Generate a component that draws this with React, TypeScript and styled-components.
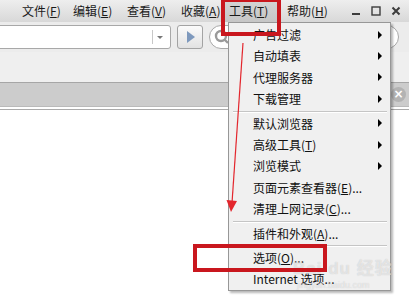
import React from 'react';
import styled, { createGlobalStyle } from 'styled-components';

const GlobalStyle = createGlobalStyle`
  html, body {
    margin: 0;
    padding: 0;
  }
  body {
    font-family: "Noto Sans CJK SC", "Noto Sans", sans-serif;
    font-size: 12px;
    color: #111;
  }
`;

const Frame = styled.div`
  position: relative;
  width: 409px;
  height: 306px;
  overflow: hidden;
  background: #fff;
`;

const MenuBar = styled.div`
  height: 22px;
  display: flex;
  align-items: center;
  padding-left: 14px;
  background: linear-gradient(#eeeeee, #d8d8d8);
`;

const TopItem = styled.div<{ $active?: boolean; $w?: number }>`
  box-sizing: border-box;
  width: ${(p) => (p.$w ? `${p.$w}px` : 'auto')};
  height: 22px;
  line-height: 22px;
  padding: 0 8px;
  white-space: nowrap;
  color: #1a1a1a;
  background: ${(p) => (p.$active ? 'linear-gradient(#d4d4d4, #c6c6c6)' : 'transparent')};
`;

const WinButtons = styled.div`
  margin-left: auto;
  display: flex;
  align-items: center;
  gap: 10px;
  padding-right: 8px;
  color: #3c3c3c;
`;

const AddressRow = styled.div`
  height: 30px;
  display: flex;
  align-items: center;
  gap: 6px;
  padding-right: 10px;
  background: #ececec;
`;

const AddressBox = styled.div`
  width: 172px;
  height: 22px;
  margin-left: -3px;
  display: flex;
  align-items: center;
  justify-content: flex-end;
  background: #fff;
  border: 1px solid #a8a8a8;
  border-radius: 3px;
`;

const DropSep = styled.div`
  width: 1px;
  height: 14px;
  background: #c8c8c8;
  margin-right: 4px;
`;

const DropArrow = styled.div`
  width: 0;
  height: 0;
  margin-right: 7px;
  border-left: 3px solid transparent;
  border-right: 3px solid transparent;
  border-top: 3px solid #777;
`;

const GoButton = styled.div`
  width: 24px;
  height: 22px;
  display: flex;
  align-items: center;
  justify-content: center;
  border: 1px solid #a3a3a3;
  border-radius: 3px;
  background: linear-gradient(#fbfbfb, #e2e2e2);
`;

const GoArrow = styled.div`
  width: 0;
  height: 0;
  margin-left: 2px;
  border-top: 6px solid transparent;
  border-bottom: 6px solid transparent;
  border-left: 8px solid #7e99bd;
`;

const SearchBox = styled.div`
  flex: 1;
  height: 22px;
  display: flex;
  align-items: center;
  padding-left: 4px;
  background: #fff;
  border: 1px solid #a8a8a8;
  border-radius: 12px;
`;

const Strip = styled.div`
  height: 30px;
  background: #efefef;
  border-bottom: 1px solid #a6a6a6;
`;

const TabStrip = styled.div`
  height: 23px;
  display: flex;
  align-items: center;
  justify-content: flex-end;
  padding-right: 3px;
  background: #cccccc;
  border-bottom: 1px solid #bababa;
`;

const CloseTab = styled.div`
  width: 15px;
  height: 15px;
  border-radius: 50%;
  background: #b3b3b3;
  color: #fff;
  font-family: "DejaVu Sans", sans-serif;
  font-size: 12px;
  font-weight: bold;
  line-height: 15px;
  text-align: center;
`;

const ContentTop = styled.div`
  height: 2px;
  background: #fff;
  border-bottom: 1px solid #aaaaaa;
`;

const Menu = styled.div`
  position: absolute;
  left: 228px;
  top: 22px;
  width: 161px;
  padding: 1px 0 0;
  background: #f0f0f0;
  border: 1px solid #979797;
  box-shadow: 2px 2px 2px rgba(0, 0, 0, 0.28);
`;

const MenuItem = styled.div`
  height: 21.4px;
  line-height: 21.4px;
  display: flex;
  align-items: center;
  padding-left: 24px;
  padding-right: 8px;
  color: #111;
`;

const Label = styled.span`
  flex: 1;
  white-space: nowrap;
`;

const SubArrow = styled.div`
  width: 0;
  height: 0;
  border-top: 4px solid transparent;
  border-bottom: 4px solid transparent;
  border-left: 4px solid #000;
`;

const Separator = styled.div`
  height: 0;
  margin: 1px 3px 0 4px;
  border-top: 1px solid #c5c5c5;
  border-bottom: 1px solid #fff;
`;

const Key = styled.u`
  text-underline-offset: 1px;
`;

const RedBox = styled.div<{ $x: number; $y: number; $w: number; $h: number }>`
  position: absolute;
  left: ${(p) => p.$x}px;
  top: ${(p) => p.$y}px;
  width: ${(p) => p.$w}px;
  height: ${(p) => p.$h}px;
  box-sizing: border-box;
  border: 4px solid #c9171e;
`;

const Overlay = styled.svg`
  position: absolute;
  left: 0;
  top: 0;
  pointer-events: none;
`;

const Watermark = styled.div`
  position: absolute;
  left: 293px;
  top: 259px;
  color: rgba(255, 255, 255, 0.55);
  text-shadow: 0 0 1px rgba(0, 0, 0, 0.2);
  font-family: "Liberation Sans", "Noto Sans CJK SC", sans-serif;
`;

const MarkTitle = styled.div`
  font-size: 17px;
  font-weight: bold;
  line-height: 20px;
  letter-spacing: 1px;
`;

const MarkUrl = styled.div`
  font-size: 9px;
  line-height: 12px;
  padding-left: 4px;
`;

type Entry = { label: React.ReactNode; sub?: boolean } | 'sep';

const entries: Entry[] = [
  { label: '广告过滤', sub: true },
  { label: '自动填表', sub: true },
  { label: '代理服务器', sub: true },
  { label: '下载管理', sub: true },
  'sep',
  { label: '默认浏览器', sub: true },
  { label: <>高级工具(<Key>T</Key>)</>, sub: true },
  { label: '浏览模式', sub: true },
  { label: <>页面元素查看器(<Key>E</Key>)...</> },
  { label: <>清理上网记录(<Key>C</Key>)...</> },
  'sep',
  { label: <>插件和外观(<Key>A</Key>)...</> },
  'sep',
  { label: <>选项(<Key>O</Key>)...</> },
  { label: 'Internet 选项...' },
];

const topMenu: { name: string; key: string; w?: number }[] = [
  { name: '文件', key: 'F', w: 51 },
  { name: '编辑', key: 'E', w: 54 },
  { name: '查看', key: 'V', w: 54 },
  { name: '收藏', key: 'A', w: 48 },
  { name: '工具', key: 'T', w: 58 },
  { name: '帮助', key: 'H' },
];

const App: React.FC = () => {
  return (
    <Frame>
      <GlobalStyle />
      <MenuBar>
        {topMenu.map((m) => (
          <TopItem key={m.key} $w={m.w} $active={m.key === 'T'}>
            {m.name}(<Key>{m.key}</Key>)
          </TopItem>
        ))}
        <WinButtons>
          <svg width="10" height="10" viewBox="0 0 10 10">
            <rect x="1" y="7" width="8" height="2" fill="#3c3c3c" />
          </svg>
          <svg width="10" height="10" viewBox="0 0 10 10">
            <rect x="1" y="1" width="8" height="8" fill="none" stroke="#3c3c3c" strokeWidth="1.4" />
          </svg>
          <svg width="10" height="10" viewBox="0 0 10 10">
            <path d="M1.5 1.5 L8.5 8.5 M8.5 1.5 L1.5 8.5" stroke="#3c3c3c" strokeWidth="2" />
          </svg>
        </WinButtons>
      </MenuBar>

      <AddressRow>
        <AddressBox>
          <DropSep />
          <DropArrow />
        </AddressBox>
        <GoButton>
          <GoArrow />
        </GoButton>
        <SearchBox>
          <svg width="16" height="16" viewBox="0 0 16 16">
            <circle cx="7" cy="7" r="5" fill="none" stroke="#9a9a9a" strokeWidth="2.4" />
            <path d="M10.5 10.5 L14 14" stroke="#9a9a9a" strokeWidth="2.4" />
          </svg>
        </SearchBox>
      </AddressRow>

      <Strip />
      <TabStrip>
        <CloseTab>×</CloseTab>
      </TabStrip>
      <ContentTop />

      <Menu>
        {entries.map((e, i) =>
          e === 'sep' ? (
            <Separator key={i} />
          ) : (
            <MenuItem key={i}>
              <Label>{e.label}</Label>
              {e.sub && <SubArrow />}
            </MenuItem>
          )
        )}
      </Menu>

      <Watermark>
        <MarkTitle>Bai du 经验</MarkTitle>
        <MarkUrl>jingyan.baidu.com</MarkUrl>
      </Watermark>

      <RedBox $x={221} $y={-2} $w={60} $h={38} />
      <RedBox $x={193} $y={244} $w={134} $h={28} />

      <Overlay width="409" height="306" viewBox="0 0 409 306">
        <path d="M243 43 L232 203" stroke="#e3262d" strokeWidth="1.2" fill="none" />
        <path d="M226.5 200 L237 201 L231 212 Z" fill="#e3262d" />
      </Overlay>
    </Frame>
  );
};

export default App;
